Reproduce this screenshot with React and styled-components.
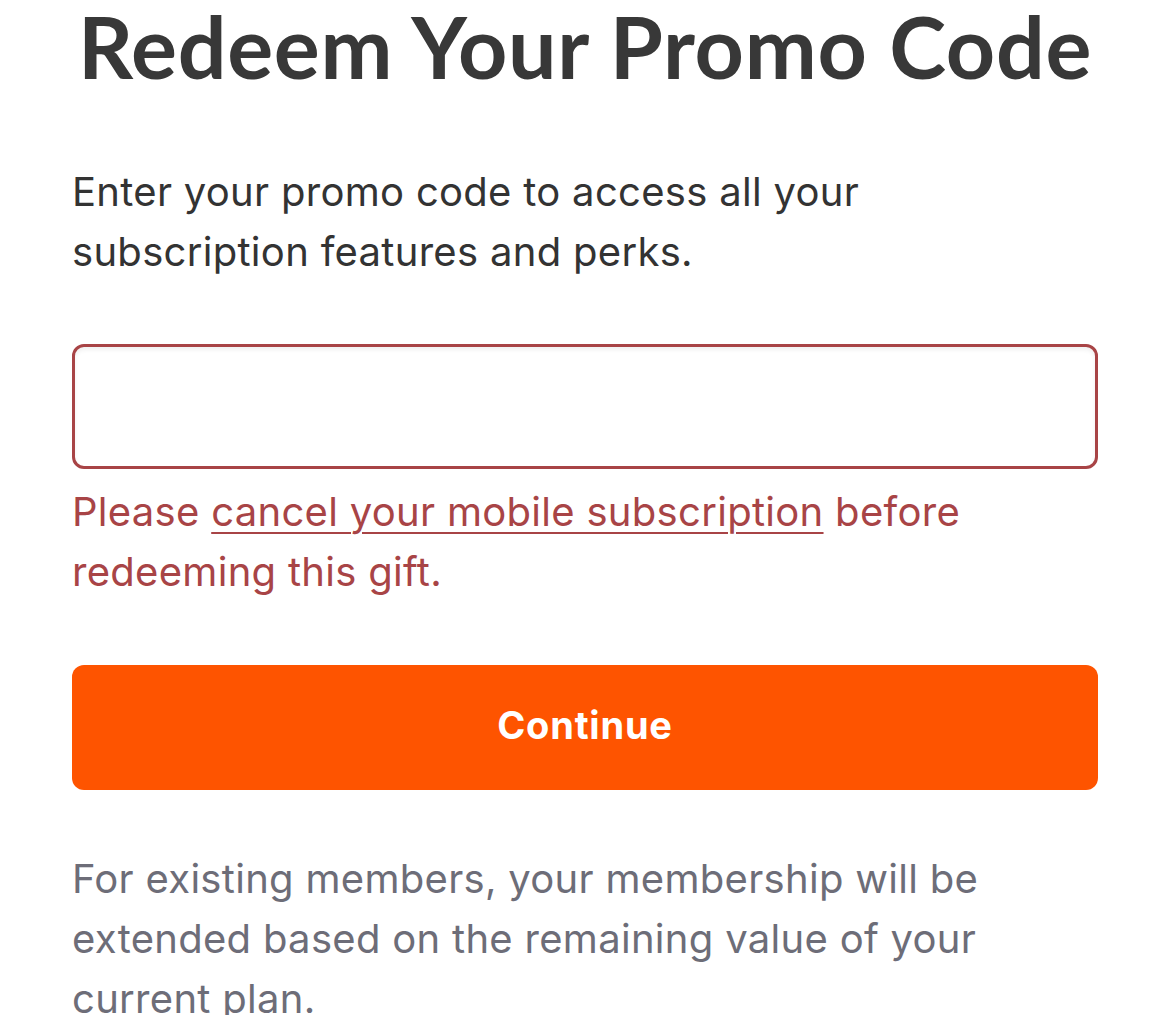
import React from "react";
import styled, { createGlobalStyle } from "styled-components";

const GlobalStyle = createGlobalStyle`
  html, body {
    margin: 0;
    padding: 0;
    background: #ffffff;
  }
  body {
    font-family: Inter, "Noto Sans", "Liberation Sans", sans-serif;
    overflow: hidden;
  }
`;

const Page = styled.main`
  width: 1170px;
  box-sizing: border-box;
  padding: 4px 72px 0 72px;
  display: flex;
  flex-direction: column;
`;

const Title = styled.h1`
  margin: 0;
  font-family: Lato, "Liberation Sans", sans-serif;
  font-weight: 700;
  font-size: 86px;
  line-height: 84px;
  letter-spacing: 0.7px;
  color: #383838;
  text-align: center;
  white-space: nowrap;
`;

const Text = styled.p`
  margin: ${(p) => p.$mt || 0}px 0 0 0;
  font-size: 40px;
  line-height: 60px;
  font-weight: 400;
  letter-spacing: 0.3px;
  color: ${(p) => p.$color || "#333333"};
`;

const ErrorLink = styled.a`
  color: inherit;
  text-decoration: underline;
  text-decoration-thickness: 2px;
  text-underline-offset: 6px;
`;

const Input = styled.input`
  margin-top: 62px;
  height: 125px;
  box-sizing: border-box;
  width: 100%;
  border: 3px solid #a84446;
  border-radius: 12px;
  box-shadow: inset 0 3px 4px rgba(0, 0, 0, 0.06);
  outline: none;
  font-size: 40px;
  padding: 0 24px;
  font-family: inherit;
`;

const Button = styled.button`
  margin-top: 63px;
  height: 125px;
  width: 100%;
  border: none;
  border-radius: 12px;
  padding: 0 0 6px 0;
  background: #fe5400;
  color: #ffffff;
  font-family: Inter, "Liberation Sans", sans-serif;
  font-weight: 700;
  font-size: 38px;
  letter-spacing: 0.8px;
  cursor: pointer;
`;

export default function App() {
  return (
    <>
      <GlobalStyle />
      <Page>
        <Title>Redeem Your Promo Code</Title>
        <Text $mt={74}>
          Enter your promo code to access all your subscription features and
          perks.
        </Text>
        <Input type="text" aria-label="Promo code" />
        <Text $mt={13} $color="#a84446">
          Please <ErrorLink href="#">cancel your mobile subscription</ErrorLink>{" "}
          before redeeming this gift.
        </Text>
        <Button>Continue</Button>
        <Text $mt={59} $color="#6d6d78">
          For existing members, your membership will be extended based on the
          remaining value of your current plan.
        </Text>
      </Page>
    </>
  );
}
